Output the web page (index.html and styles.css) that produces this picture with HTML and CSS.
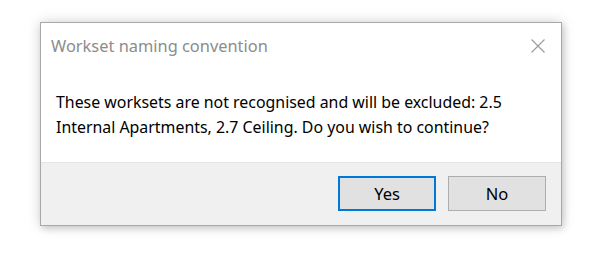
FILE: index.html
```html
<!DOCTYPE html>
<html>
<head>
<meta charset="utf-8">
<link rel="stylesheet" href="styles.css">
</head>
<body>
<div class="dialog">
  <div class="titlebar">
    <span class="title">Workset naming convention</span>
    <svg class="close" width="14" height="14" viewBox="0 0 14 14"><path d="M0.5 0.5 L13.5 13.5 M13.5 0.5 L0.5 13.5" stroke="#9a9a9a" stroke-width="1.1" fill="none"/></svg>
  </div>
  <div class="content">
    <p class="message">These worksets are not recognised and will be excluded: 2.5 Internal Apartments, 2.7 Ceiling. Do you wish to continue?</p>
  </div>
  <div class="footer">
    <button class="btn btn-default">Yes</button>
    <button class="btn">No</button>
  </div>
</div>
</body>
</html>
```
FILE: styles.css
```css
html, body {
  margin: 0;
  padding: 0;
  background: #ffffff;
}
body {
  width: 600px;
  height: 260px;
  font-family: "Noto Sans", "Open Sans", sans-serif;
  padding: 22px 0 0 40px;
  box-sizing: border-box;
}
.dialog {
  width: 522px;
  height: 204px;
  box-sizing: border-box;
  border: 1px solid #a8a8a8;
  background: #ffffff;
  box-shadow: 0 0 12px rgba(0,0,0,0.18), 2px 3px 6px rgba(0,0,0,0.12);
  display: flex;
  flex-direction: column;
}
.titlebar {
  height: 44px;
  display: flex;
  align-items: center;
  justify-content: space-between;
  padding: 0 16px 0 10px;
}
.title {
  font-size: 16.4px;
  color: #8c8c8c;
  padding-top: 1px;
}
.close {
  display: block;
  margin-top: 1px;
}
.content {
  flex: 1;
  padding: 23px 16px 0 15px;
}
.message {
  margin: 0;
  font-size: 15.9px;
  line-height: 25px;
  color: #000;
}
.footer {
  height: 63px;
  box-sizing: border-box;
  background: #f0f0f0;
  border-top: 1px solid #e4e4e4;
  display: flex;
  justify-content: flex-end;
  align-items: flex-start;
  gap: 12px;
  padding: 13px 15px 0 0;
}
.btn {
  width: 98px;
  height: 35px;
  box-sizing: border-box;
  border: 1px solid #adadad;
  background: #e1e1e1;
  font-family: inherit;
  font-size: 16.5px;
  color: #000;
  padding: 0;
  margin: 0;
}
.btn-default {
  border: 2px solid #0078d7;
}
```
